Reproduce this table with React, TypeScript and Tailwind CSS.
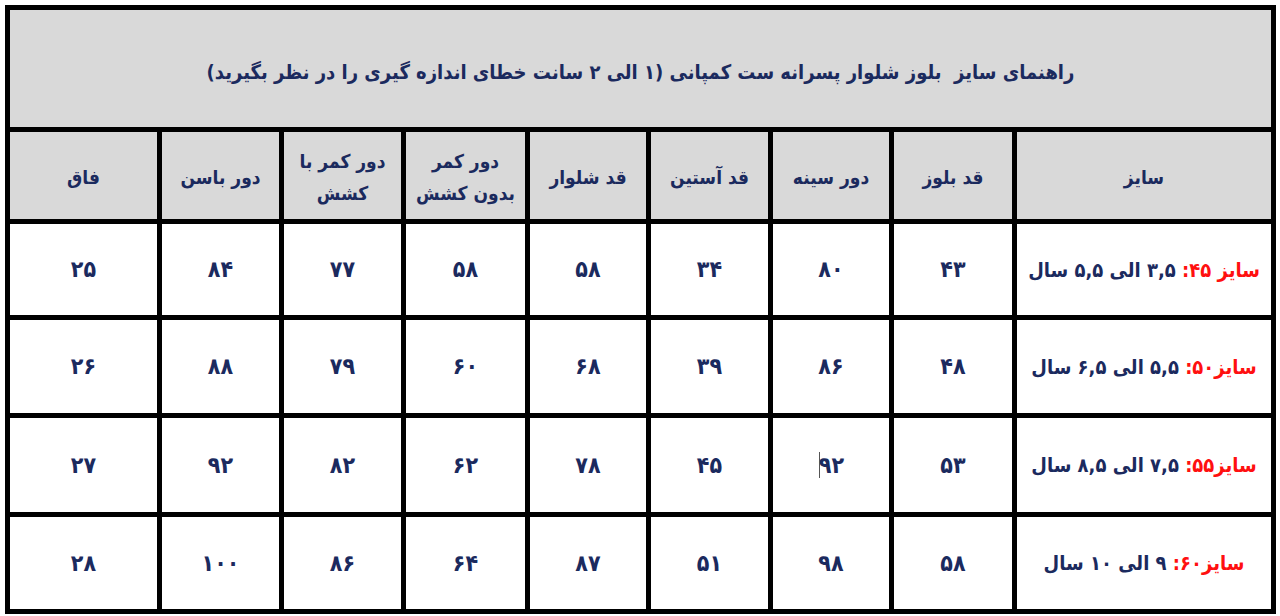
const headers = [
  "سایز",
  "قد بلوز",
  "دور سینه",
  "قد آستین",
  "قد شلوار",
  ["دور کمر", "بدون کشش"],
  ["دور کمر با", "کشش"],
  "دور باسن",
  "فاق",
];

const rows = [
  { label: "سایز ۴۵:", range: "۳,۵ الی ۵,۵ سال", values: ["۴۳", "۸۰", "۳۴", "۵۸", "۵۸", "۷۷", "۸۴", "۲۵"] },
  { label: "سایز۵۰:", range: "۵,۵ الی ۶,۵ سال", values: ["۴۸", "۸۶", "۳۹", "۶۸", "۶۰", "۷۹", "۸۸", "۲۶"] },
  { label: "سایز۵۵:", range: "۷,۵ الی ۸,۵ سال", values: ["۵۳", "۹۲", "۴۵", "۷۸", "۶۲", "۸۲", "۹۲", "۲۷"] },
  { label: "سایز۶۰:", range: "۹ الی ۱۰ سال", values: ["۵۸", "۹۸", "۵۱", "۸۷", "۶۴", "۸۶", "۱۰۰", "۲۸"] },
];

export default function App() {
  return (
    <div className="h-[616px] w-[1280px] bg-white pt-[5px] pl-[5px] font-['DejaVu_Sans_Condensed','DejaVu_Sans',sans-serif] font-bold text-[#1b2a5e]">
      <div
        dir="rtl"
        className="grid w-[1271px] grid-cols-[254px_118px_116px_117px_116px_119px_117px_117px_1fr] grid-rows-[117px_87px_91px_93px_94px_92px] gap-[5px] bg-black p-[5px]"
      >
        {/* title */}
        <div className="col-span-9 flex items-center justify-center bg-[#d9d9d9] pt-[6px] text-[20px]">
          راهنمای سایز&nbsp; بلوز شلوار پسرانه ست کمپانی (۱ الی ۲ سانت خطای اندازه گیری را در نظر بگیرید)
        </div>

        {/* header */}
        {headers.map((h, i) => (
          <div key={i} className="flex flex-col items-center justify-center bg-[#d9d9d9] pt-[2px] text-center text-[19px] leading-[32px]">
            {Array.isArray(h) ? (
              <>
                <span>{h[0]}</span>
                <span>{h[1]}</span>
              </>
            ) : (
              <span>{h}</span>
            )}
          </div>
        ))}

        {/* rows */}
        {rows.map((r, ri) => (
          <>
            <div key={`l${ri}`} className="flex items-center justify-center whitespace-nowrap bg-white text-[20px]">
              <span className="text-[#ff1010]">{r.label}</span>
              <span>&nbsp;{r.range}</span>
            </div>
            {r.values.map((v, vi) => (
              <div key={`${ri}-${vi}`} className="flex items-center justify-center bg-white text-[23px]">
                <span>{v}</span>
                {ri === 2 && vi === 1 && <span className="ml-[1px] -mr-[1px] inline-block h-[26px] w-px bg-[#555]" />}
              </div>
            ))}
          </>
        ))}
      </div>
    </div>
  );
}
